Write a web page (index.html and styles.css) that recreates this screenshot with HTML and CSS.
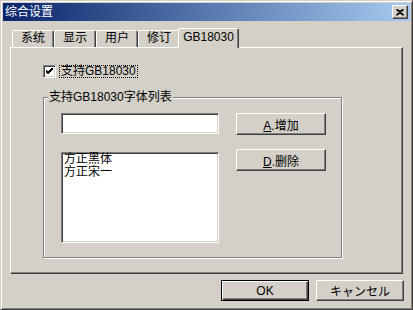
FILE: index.html
```html
<!DOCTYPE html>
<html lang="zh-CN">
<head>
    <meta charset="UTF-8">
    <title>综合设置</title>
    <link rel="stylesheet" href="styles.css">
</head>
<body>
    <div class="window">
        <div class="titlebar">
            <span class="title">综合设置</span>
            <span class="close-btn">
                <svg width="8" height="7" viewBox="0 0 8 7">
                    <path d="M0.5 0.5 L7.5 6.5 M1.5 0.5 L7.5 5.7 M7.5 0.5 L0.5 6.5 M6.5 0.5 L0.5 5.7" stroke="#000" stroke-width="1.2" fill="none"/>
                </svg>
            </span>
        </div>
        <div class="content">
            <div class="tabs">
                <span class="tab">系统</span>
                <span class="tab">显示</span>
                <span class="tab">用户</span>
                <span class="tab">修订</span>
                <span class="tab active">GB18030</span>
            </div>
            <div class="panel">
                <div class="check-row">
                    <span class="check">
                        <svg width="7" height="7" viewBox="0 0 7 7">
                            <path d="M0 2 L2 4 L7 -1 M0 3 L2 5 L7 0 M0 4 L2 6 L7 1" stroke="#000" stroke-width="1" fill="none"/>
                        </svg>
                    </span>
                    <span class="focus">支持GB18030</span>
                </div>
                <div class="group">
                    <span class="group-title">支持GB18030字体列表</span>
                    <div class="group-inner">
                        <div class="fields">
                            <div class="edit"></div>
                            <div class="listbox">
                                <div class="list-item">方正黑体</div>
                                <div class="list-item">方正宋一</div>
                            </div>
                        </div>
                        <div class="actions">
                            <button class="btn"><u>A</u>.增加</button>
                            <button class="btn"><u>D</u>.删除</button>
                        </div>
                    </div>
                </div>
            </div>
            <div class="footer">
                <button class="btn btn-default">OK</button>
                <button class="btn">キャンセル</button>
            </div>
        </div>
    </div>
</body>
</html>
```

FILE: styles.css
```css
body {
    margin: 0;
    font-family: "Liberation Sans", "Noto Sans CJK SC", sans-serif;
    font-size: 12px;
    color: #000;
}
.window {
    width: 413px;
    height: 310px;
    box-sizing: border-box;
    background: #d4d0c8;
    border: 1px solid;
    border-color: #d4d0c8 #404040 #404040 #d4d0c8;
    box-shadow: inset 1px 1px 0 #fff, inset -1px -1px 0 #808080;
    padding: 2px;
    display: flex;
    flex-direction: column;
}
/* 标题栏 */
.titlebar {
    height: 18px;
    background: linear-gradient(to right, #0a246a, #a6caf0);
    display: flex;
    align-items: center;
    justify-content: space-between;
    padding-left: 2px;
}
.title {
    color: #fff;
    font-size: 12px;
    line-height: 14px;
}
.close-btn {
    width: 16px;
    height: 14px;
    box-sizing: border-box;
    margin-right: 2px;
    background: #d4d0c8;
    border: 1px solid;
    border-color: #fff #404040 #404040 #fff;
    box-shadow: inset -1px -1px 0 #808080;
    display: flex;
    align-items: center;
    justify-content: center;
}
.content {
    flex: 1;
    padding: 7px 6px 0 7px;
    display: flex;
    flex-direction: column;
}
/* 选项卡 */
.tabs {
    height: 19px;
    display: flex;
    align-items: flex-end;
    padding-left: 2px;
}
.tab {
    width: 42px;
    height: 17px;
    box-sizing: border-box;
    border: 1px solid;
    border-bottom: none;
    border-color: #fff #404040 #404040 #fff;
    box-shadow: inset -1px 0 0 #808080;
    border-radius: 2px 2px 0 0;
    text-align: center;
    line-height: 15px;
}
.tab.active {
    width: 61px;
    height: 20px;
    margin: 0 -1px -1px -2px;
    position: relative;
    z-index: 1;
    background: #d4d0c8;
    line-height: 16px;
}
.panel {
    height: 227px;
    box-sizing: border-box;
    margin-right: 1px;
    border: 1px solid;
    border-color: #fff #404040 #404040 #fff;
    box-shadow: inset -1px -1px 0 #808080;
    padding: 17px 0 0 32px;
}
.check-row {
    display: flex;
    align-items: center;
    height: 13px;
    gap: 3px;
}
.check {
    width: 13px;
    height: 13px;
    box-sizing: border-box;
    background: #fff;
    border: 1px solid;
    border-color: #808080 #fff #fff #808080;
    box-shadow: inset 1px 1px 0 #404040, inset -1px -1px 0 #d4d0c8;
    display: flex;
    align-items: center;
    justify-content: center;
}
.focus {
    border: 1px dotted #000;
    padding: 0 1px;
    line-height: 11px;
}
/* 分组框 */
.group {
    position: relative;
    width: 299px;
    height: 161px;
    box-sizing: border-box;
    margin-top: 19px;
    border: 1px solid #808080;
    box-shadow: inset 1px 1px 0 #fff, 1px 1px 0 #fff;
    padding: 15px 0 0 17px;
}
.group-title {
    position: absolute;
    top: -7px;
    left: 4px;
    padding: 0 1px;
    background: #d4d0c8;
    line-height: 13px;
}
.group-inner {
    display: flex;
    gap: 17px;
}
.fields {
    width: 158px;
    display: flex;
    flex-direction: column;
}
.edit,
.listbox {
    box-sizing: border-box;
    background: #fff;
    border: 1px solid;
    border-color: #808080 #fff #fff #808080;
    box-shadow: inset 1px 1px 0 #404040, inset -1px -1px 0 #d4d0c8;
}
.edit {
    height: 21px;
}
.listbox {
    height: 91px;
    margin-top: 18px;
    padding: 0 2px;
}
.list-item {
    height: 13px;
    line-height: 13px;
}
.actions {
    width: 90px;
    display: flex;
    flex-direction: column;
    gap: 14px;
}
/* 按钮 */
.btn {
    height: 22px;
    padding: 0;
    font-family: inherit;
    font-size: 12px;
    color: #000;
    background: #d4d0c8;
    border: 1px solid;
    border-color: #fff #404040 #404040 #fff;
    box-shadow: inset -1px -1px 0 #808080;
    border-radius: 0;
}
.footer {
    display: flex;
    justify-content: flex-end;
    gap: 7px;
    margin-top: 6px;
}
.footer .btn {
    width: 88px;
    height: 21px;
}
.btn-default {
    border: 1px solid #000;
    box-shadow: inset 1px 1px 0 #fff, inset -1px -1px 0 #404040, inset -2px -2px 0 #808080;
}
```
